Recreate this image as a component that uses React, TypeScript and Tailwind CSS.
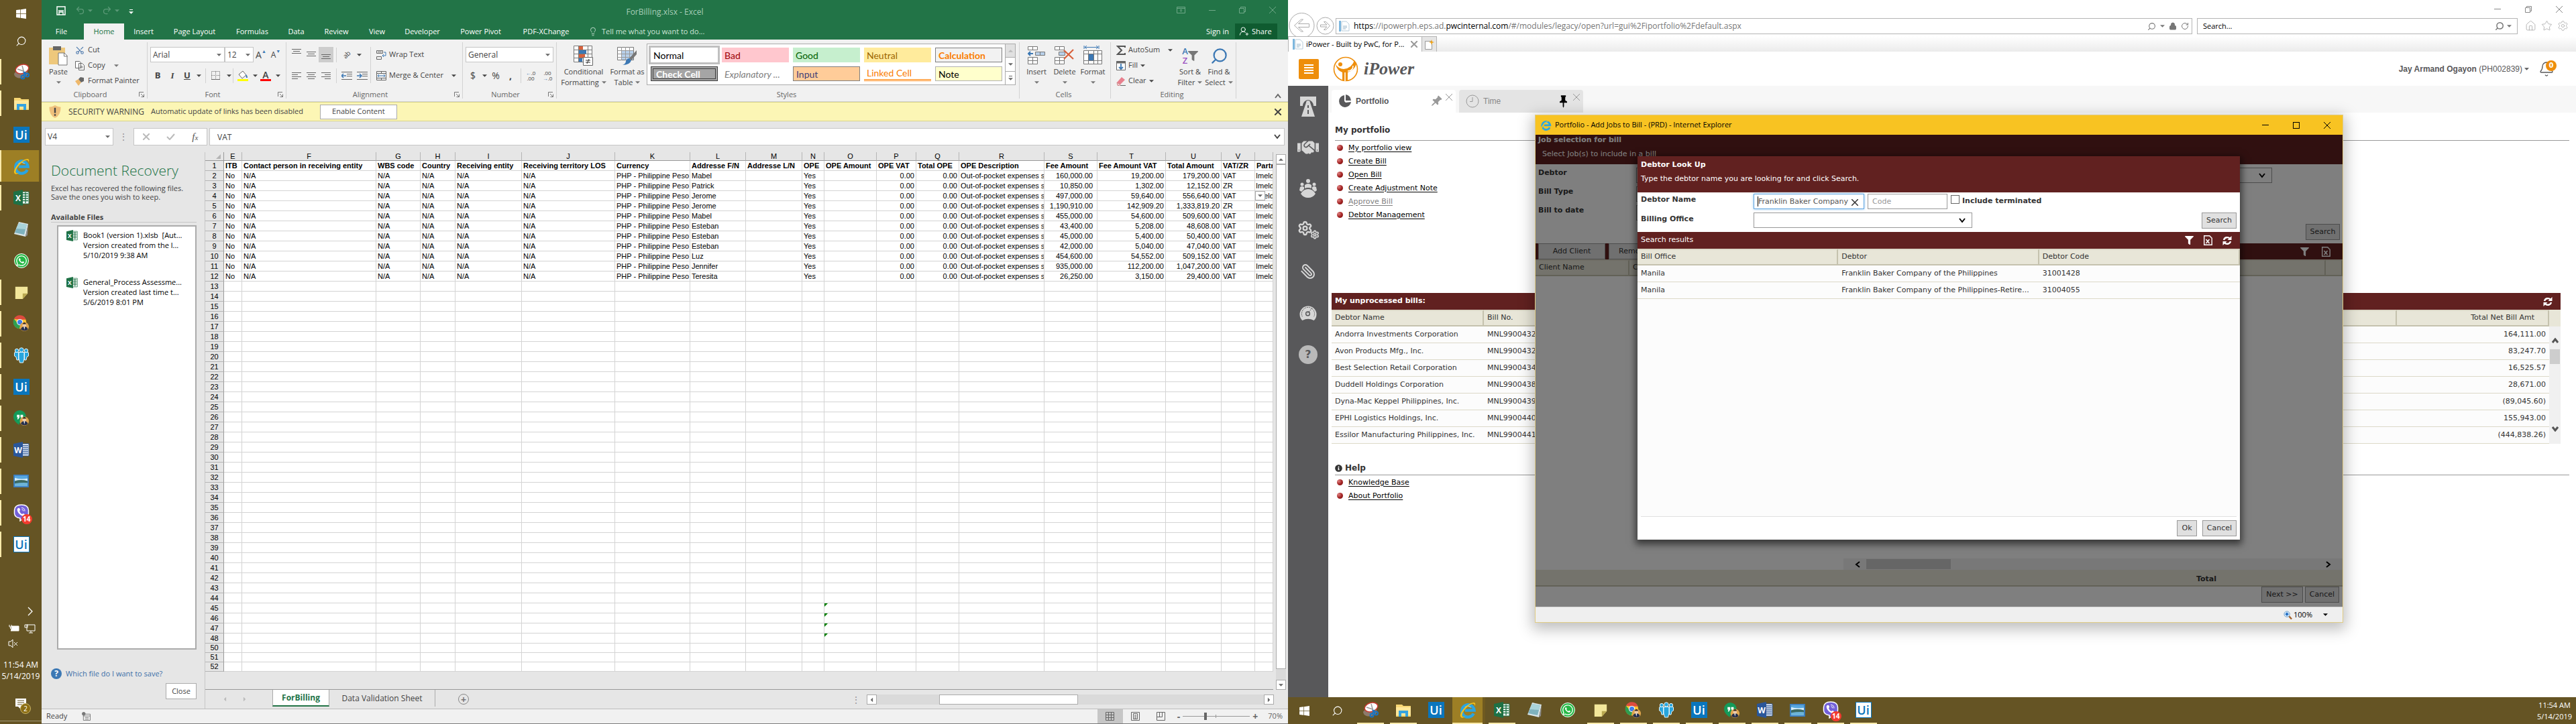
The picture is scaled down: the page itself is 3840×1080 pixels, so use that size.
import React from "react";
import { FaWindows, FaWhatsapp, FaHandshake, FaFilter, FaInfoCircle } from "react-icons/fa";
import { Search, Scissors, Paperclip, Home, Star, Settings, Bell, Lock, RotateCw, Undo2, Redo2, UserRoundPlus, Lightbulb } from "lucide-react";

type P = { children?: React.ReactNode; className?: string };

const Down = ({ className = "" }: P) => (
  <svg viewBox="0 0 8 4" className={"h-[4px] w-[7px] shrink-0 fill-current " + className}><path d="M0 0h8L4 4z" /></svg>
);
const Chev = ({ className = "" }: P) => (
  <svg viewBox="0 0 10 8" className={"h-[8px] w-[10px] shrink-0 fill-none stroke-current stroke-2 " + className}><path d="M1 1l4 5 4-5" /></svg>
);
const CloseX = ({ className = "" }: P) => (
  <svg viewBox="0 0 10 10" className={"size-[10px] shrink-0 fill-none stroke-current " + className}><path d="M0 0l10 10M10 0L0 10" /></svg>
);

/* ---------- Taskbar icons ---------- */
const UiIcon = ({ inverse = false }: { inverse?: boolean }) => (
  <span className={"flex h-[24px] w-[24px] items-center justify-center font-['Open_Sans',sans-serif] text-[18px] leading-[24px] font-semibold " + (inverse ? "border border-[#0a76bd] bg-white text-[#0a76bd]" : "bg-[#0a76bd] text-white")}>Ui</span>
);
const Snip = () => (
  <svg viewBox="0 0 24 24" className="size-[24px]"><path d="M1 15q3-5 10-5h10v7q-8 6-15 4-5-2-5-6z" fill="#8d7a6c" /><ellipse cx="13" cy="8" rx="10" ry="6.5" transform="rotate(-18 13 8)" fill="#fff" stroke="#c93b32" strokeWidth="1.5" /><path d="M6 8l9 3M13 3l3 11" stroke="#999" strokeWidth="1.5" /><g fill="none" stroke="#1874c4" strokeWidth="2"><circle cx="14" cy="20" r="2.5" /><circle cx="20.500" cy="17" r="2.500" /><path d="M15 17l3-5M18 16l-3-4" /></g></svg>
);
const Folder = () => (
  <svg viewBox="0 0 24 24" className="size-[24px]"><path d="M1 4h9l2 2h11v16H1z" fill="#f7d774" /><path d="M1 8h22v12H1z" fill="#ffe89a" /><path d="M5 22v-9h14v9h-4v-5H9v5z" fill="#35a3e0" /></svg>
);
const IEIcon = ({ small = false }: { small?: boolean }) => (
  <svg viewBox="0 0 24 24" className={small ? "size-[17px]" : "size-[26px]"}><path d="M20 17a8.500 8.500 0 1 1 .8-4.500H8" fill="none" stroke="#2aa5e2" strokeWidth="4" /><path d="M8 8.500q4-3.500 8.500 0" fill="none" stroke="#7fd3f5" strokeWidth="1.200" /><path d="M2.500 22C-1 18 9 4 19 2q5-.5 2.500 5 .5-4-3-3.500C12 5 2 17 4.500 21q2 1.500 5-1-4.500 4.500-7 2z" fill="#f5c21b" /></svg>
);
const OfficeIcon = ({ letter, word = false, small = false }: { letter: string; word?: boolean; small?: boolean }) => (
  <svg viewBox="0 0 24 24" className={small ? "size-[17px] shrink-0" : "size-[24px]"}>
    <path d="M12 3h11v18H12z" fill="#fff" stroke={word ? "#2a5699" : "#1e7145"} />
    <path d={word ? "M14 6h8M14 9h8M14 12h8M14 15h8M14 18h8" : "M14 6h8M14 9.500h8M14 13h8M14 16.500h8M18 4v16"} stroke={word ? "#2a5699" : "#1e7145"} strokeWidth="1.300" />
    <path d="M0 3l14-3v24L0 21z" fill={word ? "#2a5699" : "#1e7145"} />
    <text x="7" y="16.500" textAnchor="middle" fontSize="12" fontWeight="700" fill="#fff" fontFamily="Open Sans, sans-serif">{letter}</text>
  </svg>
);
const Notepad = () => (
  <svg viewBox="0 0 24 24" className="size-[24px]"><path d="M8 1l14 3-4 19L1 19z" fill="#d9e4e6" /><path d="M8 3l12 2-4 15L2 17z" fill="#7fb2bd" /><path d="M8 3l12 2-2 7L4 11z" fill="#a9d3da" /><path d="M22 4l-4 19 3-2z" fill="#8b8b8b" /></svg>
);
const WhatsApp = () => (
  <span className="flex size-[22px] items-center justify-center rounded-full border border-white bg-[#25b845] text-white"><FaWhatsapp size={18} /></span>
);
const Sticky = () => (
  <svg viewBox="0 0 24 24" className="size-[22px]"><path d="M2 3h20v11l-8 9H2z" fill="#f3e79b" /><path d="M22 14h-8v9z" fill="#b9a851" /></svg>
);
const Face = () => (<g><circle cx="18" cy="18" r="7" fill="#e0a54d" /><circle cx="18" cy="15.500" r="3" fill="#f1cda9" /><path d="M15 14q3-5 6 0z" fill="#33261c" /><path d="M12.500 22q1-4 5.500-4t5.500 4q-5 5-11 0z" fill="#27304d" /><path d="M17 18h2l-1 5z" fill="#fff" /></g>);
const Chrome = () => (
  <svg viewBox="0 0 26 26" className="size-[25px]"><circle cx="11" cy="11" r="10" fill="#f9c22e" /><path d="M2 6a10 10 0 0 1 18.500 1H11z" fill="#dd4b3e" /><path d="M2 6a10 10 0 0 0 8 15l3-6-6-3z" fill="#2f9e50" /><circle cx="11" cy="11" r="4.800" fill="#fff" /><circle cx="11" cy="11" r="3.700" fill="#3f7fe8" /><Face /></svg>
);
const People = () => (
  <svg viewBox="0 0 24 24" className="size-[24px]" fill="#27a5dd" stroke="#e9f7fd" strokeWidth="1"><path d="M1.500 9Q1 7.500 3 7.500h4.500V19H5L4 14.500 1.500 13zM22.500 9q.5-1.500-1.500-1.500h-4.500V19H19l1-4.500 2.500-1.500z" /><circle cx="5" cy="5" r="2.700" /><circle cx="19" cy="5" r="2.700" /><path d="M8 7.500h8V17l-1.500 6h-5L8 17z" /><circle cx="12" cy="4" r="3.200" /></svg>
);
const Hangouts = () => (
  <svg viewBox="0 0 26 26" className="size-[25px]"><path d="M11 1a10 10 0 1 1-1 20v3Q1 18 1 11A10 10 0 0 1 11 1z" fill="#149b5a" /><path d="M6.500 8h4v4l-2 3H7l1-3H6.500zM12 8h4v4l-2 3h-1.500l1-3H12z" fill="#fff" /><Face /></svg>
);
const Photo = () => (
  <svg viewBox="0 0 24 20" className="h-[19px] w-[23px]"><path d="M0 0h24v20H0z" fill="#3a7fc2" /><path d="M2 2h20v16H2z" fill="#d5ecf8" /><path d="M2 10q10-3 20 0v8H2z" fill="#3c6a63" /><path d="M2 14q12-2 20-1v5H2z" fill="#6db4d8" /><path d="M2 2h20v4Q10 8 2 5z" fill="#58a8e0" /></svg>
);
const Viber = () => (
  <span className="relative flex">
    <svg viewBox="0 0 24 26" className="h-[26px] w-[24px]"><path d="M12 1q10 0 10.500 8v5q-.5 7-8 7.500L10 25v-4Q2 20 1.500 14V9Q2 1 12 1z" fill="#7360d8" stroke="#fff" strokeWidth="1.500" /><path d="M7 6q2-1 3 2 0 2-1 2 1 4 4 5 1-1 2-1 3 1 2 3-2 2-5 0-5-3-6-7-1-3 1-4z" fill="#fff" /><path d="M12 5.500q5 0 5 5M12.500 8q2.500 0 2.500 2.500" fill="none" stroke="#fff" /></svg>
    <span className="absolute -right-1 -bottom-1 rounded-lg bg-[#f23b2f] px-[2px] font-['Open_Sans',sans-serif] text-[10px] leading-[15px] font-bold text-white">14</span>
  </span>
);

const taskItems: { name: string; icon: React.ReactNode; open: boolean; active?: boolean }[] = [
  { name: "Snipping Tool", icon: <Snip />, open: true },
  { name: "File Explorer", icon: <Folder />, open: true },
  { name: "UiPath Studio", icon: <UiIcon />, open: false },
  { name: "Internet Explorer", icon: <IEIcon />, open: true, active: true },
  { name: "Excel", icon: <OfficeIcon letter="X" />, open: true },
  { name: "Notepad", icon: <Notepad />, open: false },
  { name: "WhatsApp", icon: <WhatsApp />, open: false },
  { name: "Sticky Notes", icon: <Sticky />, open: true },
  { name: "Chrome", icon: <Chrome />, open: true },
  { name: "Teams", icon: <People />, open: true },
  { name: "UiPath", icon: <UiIcon />, open: true },
  { name: "Hangouts", icon: <Hangouts />, open: true },
  { name: "Word", icon: <OfficeIcon letter="W" word />, open: true },
  { name: "Photos", icon: <Photo />, open: true },
  { name: "Viber", icon: <Viber />, open: true },
  { name: "UiPath Robot", icon: <UiIcon inverse />, open: true },
];

function SideTaskbar() {
  return (
    <nav className="flex w-[62px] shrink-0 flex-col bg-[#655424] text-white">
      <button aria-label="Start" className="flex h-10 items-center justify-center"><FaWindows size={17} /></button>
      <button aria-label="Search" className="flex h-[43px] items-center justify-center"><Search size={17} strokeWidth={1.500} className="-scale-x-100" /></button>
      {taskItems.map((t) => (
        <button key={t.name} aria-label={t.name} className={"flex h-[47px] items-center " + (t.active ? "border-r-4 border-[#6f5a20] bg-[#9d7f25]" : "")}>
          <span className={"w-[2px] " + (t.active ? "h-full " : "h-[38px] ") + (t.open ? "bg-[#fbeaa9]" : "")} />
          <span className={"flex flex-1 justify-center " + (t.active ? "pl-1" : "pr-px")}>{t.icon}</span>
        </button>
      ))}
      <div className="mt-auto flex flex-col pb-1 text-center">
        <svg viewBox="0 0 62 66" className="h-[66px] w-[62px] fill-none stroke-white"><path d="M42 5l6 6-6 6" strokeWidth="1.300" /><path d="M17 33h11v7H16M19 35h7v4h-7z" fill="#fff" /><path d="M14 31v3h3v-3M15.500 34v3" /><path d="M40 31h12v9H40zM43 43h6M46 40v3M37 31h4v4h-4z" /><path d="M13 56h3l3-3v12l-3-3h-3zM21 57l5 5M26 57l-5 5" /></svg>
        <div className="mt-4 text-[12px] leading-[17px]"><p>11:54 AM</p><p>5/14/2019</p></div>
        <div className="relative mt-4 flex h-[38px] justify-center pt-2">
          <svg viewBox="0 0 18 18" className="size-[18px]"><path d="M1 1h16v12h-8v4l-4-4H1z" fill="#fff" /><path d="M4 4h10M4 7h10M4 10h7" stroke="#655424" /></svg>
          <span className="absolute top-4 left-[30px] size-[16px] rounded-full border border-[#c9b468] bg-[#8b6d12] text-[10px] leading-[14px]">2</span>
        </div>
        <div className="mt-1 h-px bg-[#a39a78]" />
      </div>
    </nav>
  );
}

function BottomTaskbar() {
  return (
    <nav className="flex h-10 shrink-0 bg-[#655424] text-white">
      <button aria-label="Start" className="flex w-12 items-center justify-center"><FaWindows size={17} /></button>
      <button aria-label="Search" className="flex w-[50px] items-center justify-center"><Search size={17} strokeWidth={1.500} className="-scale-x-100" /></button>
      {taskItems.map((t) => (
        <button key={t.name} aria-label={t.name} className={"flex w-[49px] flex-col items-center " + (t.active ? "border-r-4 border-[#6f5a20] bg-[#9d7f25]" : "")}>
          <span className="flex flex-1 items-center">{t.icon}</span>
          <span className={"h-[2px] " + (t.active ? "w-full " : "w-10 ") + (t.open ? "bg-[#fbeaa9]" : "")} />
        </button>
      ))}
      <div className="ml-auto flex w-[64px] flex-col justify-center text-center font-['Open_Sans',sans-serif] text-[11px] leading-[17px]"><p>11:54 AM</p><p>5/14/2019</p></div>
    </nav>
  );
}

/* ---------- Excel ribbon ---------- */
const Group = ({ label, className = "", launcher = false, children }: P & { label: string; launcher?: boolean }) => (
  <section aria-label={label} className={"my-1 flex h-[84px] shrink-0 flex-col border-r border-[#d2d2d2] " + className}>
    <div className="h-[72px]">{children}</div>
    <div className="flex h-[12px] items-center pr-1 text-[#666]">
      <span className="flex-1 text-center leading-[14px]">{label}</span>
      {launcher && <svg viewBox="0 0 8 8" className="size-[8px] fill-none stroke-[#777]"><path d="M.5 7V.5H7M3 3l4 4M7.500 3.500v4h-4" /></svg>}
    </div>
  </section>
);
const Cell = ({ className = "w-[22px]", children, label }: P & { label: string }) => (
  <button aria-label={label} className={"flex h-[23px] shrink-0 items-center justify-center " + className}>{children}</button>
);
const Sep = () => <span className="h-[22px] w-px shrink-0 bg-[#d2d2d2]" />;
const Combo = ({ value, className, label }: { value: string; className: string; label: string }) => (
  <span className={"relative flex items-center border border-[#c6c6c6] bg-white " + className}>
    <select aria-label={label} className="h-full w-full appearance-none bg-transparent px-[3px] text-[12px] outline-none"><option>{value}</option></select>
    <Down className="pointer-events-none absolute right-1 h-[3px] text-[#666]" />
  </span>
);
const Lines = ({ w }: { w: number[] }) => (
  <svg viewBox="0 0 14 12" className="h-[12px] w-[14px] stroke-[#666]">{w.map((n, i) => <path key={i} d={n < 0 ? `M${14 + n} ${i * 3 + 1.500}h${-n}` : n > 100 ? `M${(114 - n) / 2} ${i * 3 + 1.500}h${n - 100}` : `M0 ${i * 3 + 1.500}h${n}`} />)}</svg>
);
const Big = ({ icon, lines, className = "", arrowBelow = false }: { icon: React.ReactNode; lines: string[]; className?: string; arrowBelow?: boolean }) => (
  <button className={"flex flex-col items-center " + className}>
    <span className="flex h-[36px] items-center pt-1">{icon}</span>
    <span className="leading-[16px] whitespace-nowrap">{lines[0]}</span>
    <span className="flex h-[16px] items-center gap-1 leading-[16px] whitespace-nowrap">{!arrowBelow && lines[1]}<Down className="h-[3px] w-[5px] text-[#777]" /></span>
  </button>
);

const styles: { n: string; c: string }[] = [
  { n: "Normal", c: "bg-white text-black outline-3 outline-[#c0c0c0]" },
  { n: "Bad", c: "bg-[#ffc7ce] text-[#9c0006]" },
  { n: "Good", c: "bg-[#c6efce] text-[#006100]" },
  { n: "Neutral", c: "bg-[#ffeb9c] text-[#9c6500]" },
  { n: "Calculation", c: "bg-[#f2f2f2] border border-[#7f7f7f] font-bold text-[#fa7d00]" },
  { n: "Check Cell", c: "bg-[#a5a5a5] border-4 border-double border-[#3f3f3f] font-bold text-white" },
  { n: "Explanatory ...", c: "bg-white italic text-[#7f7f7f]" },
  { n: "Input", c: "bg-[#ffcc99] border border-[#7f7f7f] text-[#3f3f76]" },
  { n: "Linked Cell", c: "bg-white border-b-3 border-double border-[#ff8001] text-[#fa7d00]" },
  { n: "Note", c: "bg-[#ffffcc] border border-[#b2b2b2] text-black" },
];

function Ribbon() {
  return (
    <div className="flex h-[93px] shrink-0 border-b border-[#d2d2d2] bg-[#f1f1f1] text-[#444]">
      <Group label="Clipboard" launcher className="w-[158px]">
        <div className="flex">
          <Big className="w-[50px]" arrowBelow lines={["Paste"]} icon={<svg viewBox="0 0 28 30" className="h-[30px] w-[28px]"><path d="M0 3h24v25H0z" fill="#eec87c" /><path d="M6 1h12v6H6z" fill="#666" /><path d="M14 11h9l4 4v14H14z" fill="#fff" stroke="#777" /><path d="M22.500 11v5h5" fill="none" stroke="#777" /></svg>} />
          <div className="flex flex-col">
            {[["Cut", <Scissors key="c" size={14} strokeWidth={1.800} className="-rotate-90 text-[#4472a8]" />], ["Copy", <svg key="p" viewBox="0 0 14 14" className="size-[14px] fill-white stroke-[#666]"><path d="M.5.5h6l2 2v8h-8zM5.500 3.500h5l3 3v7h-8zM7.500 8h4M7.500 10h4" /></svg>], ["Format Painter", <svg key="f" viewBox="0 0 14 14" className="size-[14px]"><path d="M0 7l5-3 4 5-4 5z" fill="#eeb86b" /><path d="M5 4l3-3 5 1v5L9 9z" fill="#666" /></svg>]].map(([t, i]) => (
              <button key={t as string} className="flex h-[23px] items-center gap-[5px] whitespace-nowrap">{i}{t}{t === "Copy" && <Down className="ml-2 h-[3px] w-[5px] text-[#777]" />}</button>
            ))}
          </div>
        </div>
      </Group>
      <Group label="Font" launcher className="w-[207px]">
        <div className="flex flex-col gap-2 pt-[7px] pl-1">
          <div className="flex items-center"><Combo label="Font name" value="Arial" className="h-[23px] w-[111px]" /><Combo label="Font size" value="12" className="h-[23px] w-[43px]" />
            <Cell label="Increase font size"><span className="text-[14px]">A</span><span className="mb-2 text-[7px] text-[#3c78b4]">▲</span></Cell><Cell label="Decrease font size"><span className="text-[12px]">A</span><span className="mb-2 text-[7px] text-[#3c78b4]">▼</span></Cell></div>
          <div className="flex items-center text-[13px]">
            <Cell label="Bold"><b>B</b></Cell><Cell label="Italic"><b className="font-['Liberation_Serif',serif] italic">I</b></Cell><Cell label="Underline"><b className="underline">U</b></Cell><Cell label="Underline options" className="w-3"><Down className="h-[3px] w-[5px]" /></Cell>
            <span className="w-1" /><Sep />
            <Cell label="Borders" className="w-7"><svg viewBox="0 0 13 13" className="size-[13px] fill-none stroke-[#666]"><path strokeDasharray="1 1" d="M.5.5h12v12H.5zM6.500 0v13M0 6.500h13" /><path d="M0 12.500h13" /></svg></Cell><Cell label="Border options" className="w-3"><Down className="h-[3px] w-[5px]" /></Cell>
            <Sep />
            <Cell label="Fill colour" className="w-7"><svg viewBox="0 0 16 16" className="size-[16px]"><path d="M2 6l6-5 5 6-6 5z" fill="#fff" stroke="#666" /><path d="M12 6q3 1 3 5h-2z" fill="#3c78b4" /><path d="M0 13h16v3H0z" fill="#ff0" /></svg></Cell><Cell label="Fill options" className="w-2"><Down className="h-[3px] w-[5px]" /></Cell>
            <Cell label="Font colour" className="w-6"><span className="border-b-3 border-[#f00] px-[3px] text-[14px] leading-[13px] font-semibold">A</span></Cell><Cell label="Font colour options" className="w-3"><Down className="h-[3px] w-[5px]" /></Cell>
          </div>
        </div>
      </Group>
      <Group label="Alignment" launcher className="w-[263px]">
        <div className="flex gap-1 pt-[7px] pl-1">
          <div className="flex flex-col gap-2">
            <div className="flex items-center"><Cell label="Top" className="w-[22px] pb-2"><Lines w={[14, 110, 14]} /></Cell><Cell label="Middle"><Lines w={[14, 110, 14]} /></Cell><Cell label="Bottom" className="w-[22px] bg-[#cdcdcd] pt-2"><Lines w={[14, 110, 14]} /></Cell><span className="w-1" /><Sep />
              <Cell label="Orientation" className="w-[30px]"><span className="-rotate-45 text-[10px]">ab</span></Cell><Down className="h-[3px] w-[5px]" /></div>
            <div className="flex items-center"><Cell label="Left"><Lines w={[14, 9, 14, 9]} /></Cell><Cell label="Centre"><Lines w={[14, 110, 14, 110]} /></Cell><Cell label="Right"><Lines w={[-14, -9, -14, -9]} /></Cell><span className="w-1" /><Sep />
              <Cell label="Decrease indent" className="w-[30px]"><svg viewBox="0 0 16 12" className="h-[12px] w-[16px] stroke-[#666]"><path d="M0 .5h16M8 3.500h8M8 6.500h8M0 11.500h16" /><path d="M1 6h6M3 3L0 6l3 3" fill="none" stroke="#3c78b4" strokeWidth="1.500" /></svg></Cell>
              <Cell label="Increase indent" className="w-[16px]"><svg viewBox="0 0 16 12" className="h-[12px] w-[16px] stroke-[#666]"><path d="M0 .5h16M8 3.500h8M8 6.500h8M0 11.500h16" /><path d="M0 6h6M4 3l3 3-3 3" fill="none" stroke="#3c78b4" strokeWidth="1.500" /></svg></Cell></div>
          </div>
          <div className="flex flex-col gap-2 border-l border-[#d2d2d2] pl-2">
            <button className="flex h-[23px] items-center gap-1"><svg viewBox="0 0 15 14" className="h-[14px] w-[15px] fill-none stroke-[#666]"><path d="M.5.500h9v4h-9zM.5 9.500h7v4h-7zM2 2.500h6" /><path d="M11 3h3v5H9m2-2L9 8l2 2" stroke="#3c78b4" /></svg>Wrap Text</button>
            <button className="flex h-[23px] items-center gap-1 whitespace-nowrap"><svg viewBox="0 0 15 14" className="h-[14px] w-[15px] fill-none stroke-[#666]"><path d="M.5.5h14v13H.5zM0 3.500h15M0 10.500h15M7.500 0v3.500M7.500 10.500V14" /><path d="M2 7h11M4 5L2 7l2 2M11 5l2 2-2 2" stroke="#3c78b4" /></svg>Merge &amp; Center<Down className="ml-2 h-[3px] w-[5px]" /></button>
          </div>
        </div>
      </Group>
      <Group label="Number" launcher className="w-[140px]">
        <div className="flex flex-col gap-2 pt-[7px] pl-1">
          <Combo label="Number format" value="General" className="h-[23px] w-[131px]" />
          <div className="flex items-center text-[14px]"><Cell label="Currency">$</Cell><Cell label="Currency options" className="w-3"><Down className="h-[3px] w-[5px]" /></Cell><Cell label="Percent">%</Cell><Cell label="Comma"><b>,</b></Cell><span className="w-1" /><Sep />
            <Cell label="Increase decimal" className="w-7"><span className="text-[8px] leading-[8px]"><b className="text-[#3c78b4]">←</b>.0<br />.00</span></Cell><Cell label="Decrease decimal"><span className="text-[8px] leading-[8px]">.00<br /><b className="text-[#3c78b4]">→</b>.0</span></Cell></div>
        </div>
      </Group>
      <Group label="Styles" className="w-[690px]">
        <div className="flex">
          <Big className="w-[80px]" lines={["Conditional", "Formatting"]} icon={<svg viewBox="0 0 30 30" className="size-[30px]"><path d="M.5.5h27v24H.5z" fill="#fff" stroke="#777" /><path d="M.5 6.500h27M.5 12.500h27M.5 18.500h27M7.500 0v25M21.500 0v25" stroke="#777" /><path d="M8 1h6v5H8zM8 13h9v5H8z" fill="#d8613c" /><path d="M8 7h11v5H8zM8 19h5v5H8z" fill="#3c78b4" /><path d="M14.500 17.500h14v12h-14z" fill="#fff" stroke="#666" /><path d="M18 22h7M18 25h7M23 20l-3 7" stroke="#333" /></svg>} />
          <Big className="w-[50px]" lines={["Format as", "Table"]} icon={<svg viewBox="0 0 30 30" className="size-[30px]"><path d="M.5 2.500h24v19H.5z" fill="#fff" stroke="#777" /><path d="M7 8h17v13H7z" fill="#b8d0ea" /><path d="M.5 7.500h24M.5 12.500h24M.5 17.500h24M6.500 2v20M12.500 2v20M18.500 2v20" stroke="#999" /><path d="M29 7v6l-8 9-3-3z" fill="#777" /><path d="M18 19l3 3q-2 7-13 7 5-2 5-6 2-4 5-4z" fill="#3c78b4" /></svg>} />
          <div className="mt-[2px] ml-1 flex h-[62px] border border-[#ababab] bg-white">
            <div className="grid grid-cols-5 gap-x-[6px] gap-y-[6px] py-[5px] pr-1 pl-[5px] font-['Lato',sans-serif] text-[14px]">
              {styles.map((s) => <button key={s.n} className={"flex h-[22px] w-[100px] items-center px-1 whitespace-nowrap " + s.c}>{s.n}</button>)}
            </div>
            <div className="flex w-[15px] flex-col border-l border-[#ababab] text-[#666]">
              <button aria-label="Previous styles" className="flex flex-1 items-center justify-center bg-[#e1e1e1] text-[#bbb]"><Down className="h-[3px] w-[5px] rotate-180" /></button>
              <button aria-label="Next styles" className="flex flex-1 items-center justify-center border-y border-[#ababab]"><Down className="h-[3px] w-[5px]" /></button>
              <button aria-label="More styles" className="flex flex-1 flex-col items-center justify-center gap-[2px]"><i className="h-px w-[5px] bg-[#666]" /><Down className="h-[3px] w-[5px]" /></button>
            </div>
          </div>
        </div>
      </Group>
      <Group label="Cells" className="w-[136px]">
        <div className="flex pl-1">
          <Big className="w-[42px]" arrowBelow lines={["Insert"]} icon={<svg viewBox="0 0 27 28" className="h-[28px] w-[27px] fill-white stroke-[#777]"><path d="M.5.5h14v5H.5zM7.500.5v5M.5 16.500h14v10H.5zM7.500 16.500v10M.5 21.500h14" /><path d="M11.500 8.500h14v5h-14zM18.500 8.500v5" fill="#b8d0ea" /><path d="M1 11h7M4 8l-3 3 3 3" fill="none" stroke="#3c78b4" strokeWidth="2" /></svg>} />
          <Big className="w-[42px]" arrowBelow lines={["Delete"]} icon={<svg viewBox="0 0 30 28" className="h-[28px] w-[30px] fill-white stroke-[#777]"><path d="M.5.5h14v5H.5zM7.500.5v5M.5 16.500h14v10H.5zM7.500 16.500v10M.5 21.500h14" /><path d="M6.500 8.500h9v5h-9z" fill="#b8d0ea" /><path d="M14 6l14 13M28 5L14 19" stroke="#d8613c" strokeWidth="2.200" /></svg>} />
          <Big className="w-[42px]" arrowBelow lines={["Format"]} icon={<svg viewBox="0 0 28 30" className="h-[30px] w-[28px] fill-white stroke-[#777]"><path d="M.5 7.500h27v20H.5zM.5 12.500h27M.5 22.500h27M7.500 7.500v20M15.500 7.500v20M21.500 7.500v20" /><path d="M8 13h7v9H8z" fill="#3c78b4" stroke="none" /><path d="M1 0v5M23 0v5M2 2.500h20M5 0L2 2.500 5 5M19 0l3 2.500L19 5" fill="none" stroke="#3c78b4" /></svg>} />
        </div>
      </Group>
      <Group label="Editing" className="w-[187px]">
        <div className="flex pl-2">
          <div className="flex w-[86px] flex-col">
            <button className="flex h-[23px] items-center gap-1"><svg viewBox="0 0 14 14" className="size-[14px] fill-none stroke-[#555] stroke-2"><path d="M13 3V1H2l6 6-6 6h11v-2" /></svg>AutoSum<Down className="ml-2 h-[3px] w-[5px]" /></button>
            <button className="flex h-[23px] items-center gap-1"><svg viewBox="0 0 14 14" className="size-[14px] fill-white stroke-[#666]"><path d="M.5.5h13v13H.5z" /><path d="M0 2h14" strokeWidth="3" /><path d="M7 4v8M4 9l3 3 3-3" fill="none" stroke="#3c78b4" strokeWidth="1.800" /></svg>Fill<Down className="h-[3px] w-[5px]" /></button>
            <button className="flex h-[23px] items-center gap-1"><svg viewBox="0 0 14 14" className="size-[14px]"><path d="M1 9l7-8 5 4-7 7z" fill="#e8808e" /><path d="M1 9l5 3-1 1.500H2z" fill="#f6c9cf" stroke="#c88" /><path d="M6 13.500h8" stroke="#666" /></svg>Clear<Down className="h-[3px] w-[5px]" /></button>
          </div>
          <Big className="w-[48px]" lines={["Sort &", "Filter"]} icon={<span className="flex items-center"><span className="text-[13px] leading-[14px] font-semibold text-[#3c78b4]">A<br /><span className="text-[#9a4fc0]">Z</span></span><FaFilter size={15} className="text-[#777]" /></span>} />
          <Big className="w-[38px]" lines={["Find &", "Select"]} icon={<Search size={27} strokeWidth={2} className="-scale-x-100 text-[#3c78b4]" />} />
        </div>
      </Group>
      <button aria-label="Collapse ribbon" className="mt-auto mr-[10px] mb-1 ml-auto text-[#666]"><Chev className="rotate-180" /></button>
    </div>
  );
}

/* ---------- Excel grid ---------- */
const cols: [string, string][] = [
  ["E", "w-[27px]"], ["F", "w-[200px]"], ["G", "w-[66px]"], ["H", "w-[52px]"], ["I", "w-[99px]"], ["J", "w-[139px]"], ["K", "w-[112px]"],
  ["L", "w-[83px]"], ["M", "w-[84px]"], ["N", "w-[33px]"], ["O", "w-[78px]"], ["P", "w-[59px]"], ["Q", "w-[64px]"], ["R", "w-[127px]"],
  ["S", "w-[79px]"], ["T", "w-[102px]"], ["U", "w-[83px]"], ["V", "w-[50px]"], ["", ""],
];
const heads = ["ITB", "Contact person in receiving entity", "WBS code", "Country", "Receiving entity", "Receiving territory LOS", "Currency", "Addresse F/N", "Addresse L/N", "OPE", "OPE Amount", "OPE VAT", "Total OPE", "OPE Description", "Fee Amount", "Fee Amount VAT", "Total Amount", "VAT/ZR", "Partr"];
const records: [string, string, string, string, string][] = [
  ["Mabel", "160,000.00", "19,200.00", "179,200.00", "VAT"], ["Patrick", "10,850.00", "1,302.00", "12,152.00", "ZR"],
  ["Jerome", "497,000.00", "59,640.00", "556,640.00", "VAT"], ["Jerome", "1,190,910.00", "142,909.20", "1,333,819.20", "ZR"],
  ["Mabel", "455,000.00", "54,600.00", "509,600.00", "VAT"], ["Esteban", "43,400.00", "5,208.00", "48,608.00", "VAT"],
  ["Esteban", "45,000.00", "5,400.00", "50,400.00", "VAT"], ["Esteban", "42,000.00", "5,040.00", "47,040.00", "VAT"],
  ["Luz", "454,600.00", "54,552.00", "509,152.00", "VAT"], ["Jennifer", "935,000.00", "112,200.00", "1,047,200.00", "VAT"],
  ["Teresita", "26,250.00", "3,150.00", "29,400.00", "VAT"],
];
const rowOf = (r: [string, string, string, string, string]) => ["No", "N/A", "N/A", "N/A", "N/A", "N/A", "PHP - Philippine Peso", r[0], "", "Yes", "", "0.00", "0.00", "Out-of-pocket expenses s", r[1], r[2], r[3], r[4], "Imeld"];
const rowNumbers = [...Array.from({ length: 48 }, (_, i) => i + 1), 50, 51, 52];

function Grid() {
  return (
    <table className="w-full table-fixed border-separate border-spacing-0 font-['Liberation_Sans',Arial,sans-serif] text-[11px] text-black">
      <colgroup><col className="w-[28px]" />{cols.map(([c, w], i) => <col key={c + i} className={w} />)}</colgroup>
      <thead>
        <tr className="h-[13px]">
          <th className="border-r border-b border-[#999] bg-[#e6e6e6] p-0"><svg viewBox="0 0 8 8" className="mr-1 ml-auto size-[7px] fill-[#b5b5b5]"><path d="M8 0v8H0z" /></svg></th>
          {cols.map(([c], i) => <th key={i} className="border-r border-b border-r-[#b5b5b5] border-b-[#999] bg-[#e6e6e6] p-0 leading-[12px] font-normal">{c}</th>)}
        </tr>
      </thead>
      <tbody>
        {rowNumbers.map((n) => {
          const vals = n === 1 ? heads : n <= 12 ? rowOf(records[n - 2]) : null;
          return (
            <tr key={n} className={n < 49 ? "h-[15px]" : "h-[14px]"}>
              <th className="border-r border-b border-r-[#999] border-b-[#b5b5b5] bg-[#e6e6e6] p-0 leading-[13px] font-normal">{n}</th>
              {cols.map((_, i) => (
                <td key={i} className={"relative overflow-hidden border-r border-b border-[#d4d4d4] bg-white p-0 leading-[13px] whitespace-nowrap " + (n === 1 ? "pl-[2px] font-bold" : i === 14 ? "pr-[6px] text-right" : i === 11 || i === 12 || i === 15 || i === 16 ? "pr-[2px] text-right" : i === 18 ? "pl-px" : "pl-[2px]")}>
                  {vals ? vals[i] : null}
                  {n === 4 && i === 18 && <button aria-label="Open list" className="absolute top-0 left-0 flex h-[14px] w-[15px] items-center justify-center border border-[#aaa] bg-white text-[#666]"><Down className="h-[3px] w-[5px]" /></button>}
                  {n >= 45 && n <= 48 && i === 10 && <svg viewBox="0 0 5 5" className="absolute top-0 left-0 size-[5px] fill-[#008000]"><path d="M0 0h5L0 5z" /></svg>}
                </td>
              ))}
            </tr>
          );
        })}
      </tbody>
    </table>
  );
}

const Recovered = ({ lines, className = "" }: { lines: string[]; className?: string }) => (
  <button className={"flex w-full gap-2 pl-3 text-left text-black " + className}>
    <OfficeIcon letter="X" small />
    <span className="leading-[15px] whitespace-pre">{lines.map((l) => <span key={l} className="block">{l}</span>)}</span>
  </button>
);

const ribbonTabs: [string, string][] = [["Insert", "w-[58px]"], ["Page Layout", "w-[94px]"], ["Formulas", "w-[78px]"], ["Data", "w-[53px]"], ["Review", "w-[67px]"], ["View", "w-[54px]"], ["Developer", "w-[81px]"], ["Power Pivot", "w-[93px]"], ["PDF-XChange", "w-[102px]"]];

function Excel() {
  return (
    <main className="flex min-w-0 flex-1 flex-col border-b border-[#7a7a7a] bg-[#e6e6e6] text-[#444]">
      <header className="shrink-0 bg-[#227447] text-white">
        <div className="flex h-[35px] items-start">
          <div className="flex w-[240px] items-center gap-[14px] pt-2 pl-[22px] text-[#5c9a78]">
            <button aria-label="Save"><svg viewBox="0 0 14 14" className="size-[14px] fill-none stroke-white stroke-[1.500]"><path d="M1 1h12v12H1zM3 7h8M4 13V9h6v4" /></svg></button>
            <button aria-label="Undo" className="flex items-center gap-1"><Undo2 size={15} /><Down className="h-[3px] w-[5px]" /></button>
            <button aria-label="Redo" className="flex items-center gap-1"><Redo2 size={15} /><Down className="h-[3px] w-[5px]" /></button>
            <button aria-label="Customize" className="flex flex-col items-center gap-[2px] pt-1 text-white"><i className="h-px w-[5px] bg-white" /><Down className="h-[3px] w-[5px]" /></button>
          </div>
          <h1 className="flex-1 pt-[10px] text-center text-[12px] leading-[16px] text-[#a7cdb7]">ForBilling.xlsx - Excel</h1>
          <div className="flex w-[240px] items-center justify-end gap-[35px] pt-[10px] pr-[18px] text-[#6fa888]">
            <svg viewBox="0 0 13 10" className="h-[10px] w-[13px] fill-none stroke-current"><path d="M.5.5h12v9H.5zM0 2.500h13M6.500 8V4M5 5.500L6.500 4 8 5.500" /></svg>
            <i className="h-px w-[10px] bg-current" />
            <svg viewBox="0 0 10 10" className="size-[10px] fill-none stroke-current"><path d="M.5 2.500h7v7h-7zM2.500 2.500v-2h7v7h-2" /></svg>
            <CloseX />
          </div>
        </div>
        <nav className="flex h-[24px] items-stretch leading-[24px]">
          <button className="mr-[4px] w-[59px]">File</button>
          <button className="w-[60px] bg-[#f1f1f1] text-[#227447]">Home</button>
          {ribbonTabs.map(([t, w]) => <button key={t} className={"whitespace-nowrap " + w}>{t}</button>)}
          <button className="ml-3 flex items-center gap-[6px] text-[#cfe4d8]"><Lightbulb size={14} strokeWidth={1.500} />Tell me what you want to do...</button>
          <button className="ml-auto pr-[9px]">Sign in</button>
          <button className="mr-4 mb-px flex w-[63px] items-center gap-1 bg-[#0f5b30] px-[6px]"><UserRoundPlus size={15} strokeWidth={1.500} />Share</button>
        </nav>
      </header>
      <Ribbon />
      <div className="flex h-[29px] shrink-0 items-center border-y border-[#d9d58a] bg-[#fcf6b5] pr-[10px] pl-[10px]">
        <svg viewBox="0 0 20 22" className="h-[21px] w-[20px]"><path d="M10 1q5 3 9 3 0 13-9 17Q1 17 1 4q4 0 9-3z" fill="#eec07c" /><path d="M10 5v8M10 15v2.500" stroke="#444" strokeWidth="2.500" /></svg>
        <span className="ml-[10px] text-[12px]">SECURITY WARNING</span>
        <span className="ml-[10px]">Automatic update of links has been disabled</span>
        <button className="ml-[25px] h-[22px] w-[115px] border border-[#ababab] bg-white">Enable Content</button>
        <button aria-label="Dismiss" className="ml-auto"><CloseX className="size-[8px] stroke-2" /></button>
      </div>
      <div className="flex h-[46px] shrink-0 items-start pt-[10px] pr-[5px] pl-[5px]">
        <Combo label="Name box" value="V4" className="h-[26px] w-[102px]" />
        <span className="w-[30px] pt-[2px] text-center text-[14px] text-[#999]">⋮</span>
        <div className="flex h-[26px] w-[110px] items-center justify-around border border-[#c6c6c6] bg-white text-[#bbb]">
          <button aria-label="Cancel"><CloseX className="stroke-2" /></button>
          <button aria-label="Enter"><svg viewBox="0 0 13 10" className="h-[10px] w-[13px] fill-none stroke-current stroke-2"><path d="M1 5l4 4 7-8" /></svg></button>
          <button className="font-['Liberation_Serif',serif] text-[15px] text-[#555] italic">f<span className="text-[11px]">x</span></button>
        </div>
        <div className="relative ml-[3px] flex h-[26px] flex-1 items-center border border-[#c6c6c6] bg-white">
          <input aria-label="Formula" defaultValue="VAT" className="h-full w-full bg-transparent pl-[11px] text-[12px] outline-none" />
          <Chev className="absolute right-[5px] h-[6px] w-[8px]" />
        </div>
      </div>
      <div className="flex min-h-0 flex-1">
        <aside className="flex w-[244px] shrink-0 flex-col border-r border-[#c6c6c6] pr-[12px] pl-[14px]">
          <h2 className="mt-[13px] text-[21px] leading-[28px] font-light whitespace-nowrap text-[#227447]">Document Recovery</h2>
          <p className="mt-[6px] leading-[13px] whitespace-nowrap">Excel has recovered the following files.<br />Save the ones you wish to keep.</p>
          <h3 className="mt-4 border-b border-[#c6c6c6] leading-[15px] font-bold">Available Files</h3>
          <div className="mt-[4px] ml-[9px] flex min-h-0 flex-1 flex-col overflow-hidden border-2 border-[#ababab] bg-white pt-[5px]">
            <Recovered lines={["Book1 (version 1).xlsb  [Aut...", "Version created from the l...", "5/10/2019 9:38 AM"]} />
            <Recovered className="mt-[25px]" lines={["General_Process Assessme...", "Version created last time t...", "5/6/2019 8:01 PM"]} />
          </div>
          <a href="#help" className="mt-[27px] flex items-center gap-[6px] leading-[17px] text-[#3c6fa8]"><span className="flex size-[16px] items-center justify-center rounded-full bg-[#3c78b4] text-[12px] font-bold text-white">?</span>Which file do I want to save?</a>
          <button className="mt-[6px] mb-[14px] h-[24px] w-[46px] shrink-0 self-end border border-[#ababab] bg-white">Close</button>
        </aside>
        <div className="flex min-w-0 flex-1 flex-col">
          <div className="flex min-h-0 flex-1">
            <div className="min-w-0 flex-1 overflow-hidden border-b border-[#999]"><Grid /></div>
            <div className="flex w-[22px] flex-col pt-[3px] pr-[3px] pl-[4px] text-[#666]">
              <button aria-label="Scroll up" className="flex h-[15px] items-center justify-center border border-[#ababab] bg-white"><Down className="rotate-180" /></button>
              <span className="flex-1 border border-[#ababab] bg-white" />
              <span className="h-4 bg-[#dadada]" />
              <button aria-label="Scroll down" className="flex h-[15px] items-center justify-center border border-[#ababab] bg-white"><Down /></button>
            </div>
          </div>
          <div className="flex h-[28px] shrink-0">
            <div className="flex w-[100px] items-center gap-[22px] pl-[26px] text-[#bbb]"><Down className="rotate-90" /><Down className="-rotate-90" /></div>
            <button className="h-[25px] w-[85px] border-x border-b-2 border-x-[#ababab] border-b-[#227447] bg-white text-[12px] font-bold text-[#227447]">ForBilling</button>
            <button className="h-[25px] w-[158px] border-r border-[#ababab] text-[12px]">Data Validation Sheet</button>
            <button aria-label="New sheet" className="mt-[6px] ml-[34px] size-[16px] rounded-full border border-[#888] text-[14px] leading-[13px] font-bold text-[#777]">+</button>
            <div className="mt-[7px] mr-[21px] ml-auto flex h-[15px] w-[630px] items-center">
              <span className="flex w-[23px] justify-start text-[14px] text-[#999]">⋮</span>
              <button aria-label="Scroll left" className="flex h-full w-[15px] items-center justify-center border border-[#ababab] bg-white text-[#666]"><Down className="rotate-90" /></button>
              <span className="flex h-full flex-1 bg-[#dadada] pl-[93px]"><span className="w-[207px] border border-[#ababab] bg-white" /></span>
              <button aria-label="Scroll right" className="flex h-full w-[15px] items-center justify-center border border-[#ababab] bg-white text-[#666]"><Down className="-rotate-90" /></button>
            </div>
          </div>
        </div>
      </div>
      <footer className="flex h-[22px] shrink-0 items-center border-t border-[#bdbdbd] bg-[#f1f1f1] pr-2 pl-[7px]">
        <span>Ready</span>
        <svg viewBox="0 0 14 14" className="ml-[22px] size-[13px] fill-none stroke-[#777]"><path d="M2.500 3.500h11v10h-11zM2 6.500h12M5 9h6M5 11.500h6" /><circle cx="3" cy="3" r="2.500" fill="#777" /></svg>
        <div className="ml-auto flex h-full items-center text-[#666]">
          <button aria-label="Normal view" className="flex h-full w-[38px] items-center justify-center bg-[#c6c6c6]"><svg viewBox="0 0 13 13" className="size-[13px] fill-none stroke-current"><path d="M.5.5h12v12H.5zM4.500 0v13M8.500 0v13M0 4.500h13M0 8.500h13" /></svg></button>
          <button aria-label="Page layout view" className="flex h-full w-[38px] items-center justify-center"><svg viewBox="0 0 13 13" className="size-[13px] fill-none stroke-current"><path d="M.5.5h12v12H.5zM3.500 2.500h6v8h-6zM5 5h3M5 7h3M5 9h3" /></svg></button>
          <button aria-label="Page break view" className="flex h-full w-[38px] items-center justify-center"><svg viewBox="0 0 13 13" className="size-[13px] fill-none stroke-current"><path d="M.5.5h12v12H.5zM.5 7.500h8v-7M4.500.5v7" /></svg></button>
          <b className="ml-[5px] text-[14px]">-</b>
          <span className="mx-1 flex h-[11px] w-[100px] items-center bg-[linear-gradient(#999,#999)] bg-[length:100%_1px] bg-center bg-no-repeat"><i className="ml-[32px] h-full w-[4px] bg-[#666]" /><i className="ml-[13px] h-[5px] w-px bg-[#999]" /></span>
          <b className="text-[14px]">+</b><span className="ml-[15px]">70%</span>
        </div>
      </footer>
    </main>
  );
}

/* ---------- iPower ---------- */
const FilterIcon = () => <FaFilter size={13} />;
const XlsIcon = () => (
  <svg viewBox="0 0 13 15" className="h-[15px] w-[13px] fill-none stroke-current"><path d="M.7.700h8l3.500 3.500v10H.7z" strokeWidth="1.400" /><path d="M3.500 6l5 6M8.500 6l-5 6" strokeWidth="1.600" /></svg>
);
const Refresh = () => (
  <svg viewBox="0 0 14 14" className="size-[14px] fill-none stroke-current"><path d="M2 6a5.200 5.200 0 0 1 9-2M12 8a5.200 5.200 0 0 1-9 2" strokeWidth="2.400" /><path d="M13.500 0v6h-6zM.5 14V8h6z" fill="currentColor" stroke="none" /></svg>
);
const Bullet = () => <span className="size-[9px] shrink-0 rounded-full bg-[radial-gradient(circle_at_30%_30%,#e08080,#a02020_55%,#701010)]" />;
const PageIcon = () => (
  <svg viewBox="0 0 16 16" className="size-[16px] shrink-0"><path d="M0 0h3v16H0z" fill="#7db7de" /><path d="M4 1h7l4 4v10H4z" fill="#fff" stroke="#b9cddb" /><path d="M6 8h6M6 10h6M6 12h4" stroke="#9db8ca" /></svg>
);
const Pin = ({ className = "" }: P) => (
  <svg viewBox="0 0 12 20" className={"h-[19px] w-[11px] fill-current " + className}><path d="M2 0h8v2L9 3v5l3 2v2H7v6l-1 2-1-2v-6H0v-2l3-2V3L2 2z" /></svg>
);
const LinkList = ({ items }: { items: string[] }) => (
  <ul>
    {items.map((t) => (
      <li key={t} className="flex h-[20px] items-center gap-2 pl-[3px]"><Bullet /><a href="#menu" className={"leading-[15px] underline underline-offset-2 " + (t === "Approve Bill" ? "text-[#808080]" : "text-black")}>{t}</a></li>
    ))}
  </ul>
);
const Btn = ({ children, className = "" }: P) => <button className={"h-[24px] border border-[#999] bg-[#e0e0e0] whitespace-nowrap text-[#333] " + className}>{children}</button>;

const bills: [string, string, string][] = [
  ["Andorra Investments Corporation", "MNL9900432", "164,111.00"], ["Avon Products Mfg., Inc.", "MNL9900432", "83,247.70"],
  ["Best Selection Retail Corporation", "MNL9900434", "16,525.57"], ["Duddell Holdings Corporation", "MNL9900438", "28,671.00"],
  ["Dyna-Mac Keppel Philippines, Inc.", "MNL9900439", "(89,045.60)"], ["EPHI Logistics Holdings, Inc.", "MNL9900440", "155,943.00"],
  ["Essilor Manufacturing Philippines, Inc.", "MNL9900441", "(444,838.26)"],
];

const th = "h-[25px] border-r-2 border-b-2 border-t-2 border-[#c5c2ae] border-t-[#dcd9c8] bg-[#e8e6d8] px-[5px] text-left font-normal";

function DebtorDialog() {
  return (
    <div role="dialog" aria-label="Debtor Look Up" className="absolute top-[61px] right-[153px] bottom-[123px] left-[152px] flex flex-col bg-[#fcfcfc] text-[#333] shadow-[0_4px_10px_3px_rgba(0,0,0,0.55)]">
      <div className="h-[54px] shrink-0 bg-[#612120] px-[5px] pt-[5px] text-white"><h2 className="leading-[16px] font-bold">Debtor Look Up</h2><p className="mt-[5px] leading-[16px]">Type the debtor name you are looking for and click Search.</p></div>
      <div className="flex h-[59px] shrink-0 flex-col gap-[5px] bg-white px-[5px] pt-[2px]">
        <div className="flex h-[23px] items-start">
          <label htmlFor="dn" className="w-[168px] pt-[1px] leading-[15px] font-bold">Debtor Name</label>
          <span className="relative flex w-[165px]"><input id="dn" defaultValue="Franklin Baker Company" className="h-[23px] w-full border border-[#5fa4e0] bg-white pr-3 pl-[6px] text-[#555] shadow-[0_0_4px_#9cc8ee] outline-none" /><i className="absolute top-[4px] left-[6px] h-[15px] w-px bg-black" /><CloseX className="absolute top-[8px] right-[9px] size-[8px] stroke-[1.500]" /></span>
          <input aria-label="Code" placeholder="Code" className="ml-[5px] h-[23px] w-[119px] border border-[#999] bg-white px-[6px] placeholder:text-[#999]" />
          <input id="term" type="checkbox" className="mt-[2px] ml-[5px] size-[13px] appearance-none border border-[#666] bg-white" />
          <label htmlFor="term" className="ml-[4px] pt-[3px] leading-[16px] font-bold">Include terminated</label>
        </div>
        <div className="flex items-start">
          <label htmlFor="bo" className="w-[168px] pt-[2px] leading-[15px] font-bold">Billing Office</label>
          <span className="relative flex w-[326px]"><select id="bo" className="h-[23px] w-full appearance-none border border-[#999] bg-white"><option></option></select><Chev className="pointer-events-none absolute top-[8px] right-[10px] text-black" /></span>
          <Btn className="ml-auto w-[52px]">Search</Btn>
        </div>
      </div>
      <div className="flex h-[25px] shrink-0 items-center gap-[15px] bg-[#612120] pr-[12px] pl-[5px] text-white"><span className="mr-auto">Search results</span><FilterIcon /><XlsIcon /><Refresh /></div>
      <table className="w-full table-fixed border-separate border-spacing-0">
        <thead><tr>{["Bill Office", "Debtor", "Debtor Code"].map((h) => <th key={h} className={th}>{h}</th>)}</tr></thead>
        <tbody>
          {[["Manila", "Franklin Baker Company of the Philippines", "31001428"], ["Manila", "Franklin Baker Company of the Philippines-Retire...", "31004055"]].map((r) => (
            <tr key={r[2]}>{r.map((c) => <td key={c} className="h-[25px] border-b border-[#dcd9c8] px-[5px]">{c}</td>)}</tr>
          ))}
        </tbody>
      </table>
      <div className="mt-auto flex h-[35px] shrink-0 bg-white px-[5px]"><div className="flex flex-1 justify-end gap-2 border-t border-[#e0e0e0] pt-[5px]"><Btn className="w-[30px]">Ok</Btn><Btn className="w-[51px]">Cancel</Btn></div></div>
    </div>
  );
}

function Popup() {
  return (
    <div className="absolute top-[171px] right-[347px] bottom-[151px] left-[368px] flex flex-col border border-[#e0cc85] bg-white shadow-[0_6px_20px_4px_rgba(0,0,0,0.25)]">
      <div className="flex h-[29px] shrink-0 items-center bg-[#f8c322] pr-[18px] pl-[7px] font-['Open_Sans',sans-serif] text-black">
        <IEIcon small /><span className="ml-[5px] flex-1 text-[11px]">Portfolio - Add Jobs to Bill - (PRD) - Internet Explorer</span>
        <div className="flex items-center gap-[36px]"><i className="h-px w-[10px] bg-black" /><i className="size-[10px] border border-black" /><CloseX /></div>
      </div>
      <div className="relative flex min-h-0 flex-1 flex-col text-[#333]">
        <div className="h-[44px] shrink-0 bg-[#612120] px-[4px] text-white"><h2 className="leading-[16px] font-bold">Job selection for bill</h2><p className="mt-[5px] pl-[6px] leading-[16px]">Select Job(s) to include in a bill</p></div>
        <div className="grid h-[118px] shrink-0 grid-cols-[146px_1fr] content-start gap-y-[5px] px-[4px] pt-[5px] font-bold">
          {["Debtor", "Bill Type", "Bill to date"].map((l, i) => (
            <React.Fragment key={l}>
              <label htmlFor={"f" + i} className="leading-[16px]">{l}</label>
              {i === 0 ? <span className="relative flex w-[948px]"><select id="f0" className="h-[23px] w-full appearance-none border border-[#999]"><option></option></select><Chev className="absolute top-[8px] right-[10px] text-black" /></span> : <input id={"f" + i} className="h-[23px] w-[300px] border border-[#999]" />}
            </React.Fragment>
          ))}
          <Btn className="col-span-2 w-[51px] justify-self-end font-normal">Search</Btn>
        </div>
        <div className="flex h-[24px] shrink-0 items-center bg-[#612120] pr-[18px] pl-[4px] text-white"><Btn className="w-[100px]">Add Client</Btn><Btn className="mr-auto ml-[5px] w-[110px]">Remove Client</Btn><FilterIcon /><span className="w-[19px]" /><XlsIcon /></div>
        <table className="w-full table-fixed border-separate border-spacing-0"><thead><tr><th className={th + " w-[140px]"}>Client Name</th><th className={th}>Client Code</th><th className={th + " w-[25px]"} /></tr></thead></table>
        <div className="mt-auto ml-[459px] flex h-[17px] shrink-0 items-center bg-[#f0f0f0]"><Chev className="ml-4 rotate-90 text-black" /><span className="ml-2 h-[15px] w-[126px] bg-[#cdcdcd]" /><Chev className="mr-[16px] ml-auto -rotate-90 text-black" /></div>
        <div className="flex h-[25px] shrink-0 items-center justify-end border-b-2 border-[#c5c2ae] bg-[#e8e6d8] pt-[5px] pr-[188px] font-bold">Total</div>
        <div className="flex h-[30px] shrink-0 justify-end gap-[3px] pr-[5px]"><Btn className="w-[62px]">Next &gt;&gt;</Btn><Btn className="w-[51px]">Cancel</Btn></div>
        <div className="absolute inset-0 bg-black/50" />
      </div>
      <div className="flex h-[23px] shrink-0 items-center justify-end border-t border-[#d5d5d5] bg-[#efefef] pr-[22px] font-['Open_Sans',sans-serif] text-[11px] text-black"><svg viewBox="0 0 14 14" className="size-[13px]"><circle cx="5.500" cy="5.500" r="4.500" fill="#cfe6fa" stroke="#6f9dc4" /><path d="M3 5.500h5M5.500 3v5" stroke="#1665c0" strokeWidth="2" /><path d="M9 9l4 4.500" stroke="#a4632f" strokeWidth="2.500" /></svg><span className="mr-[16px] ml-[2px]">100%</span><Down /></div>
      <DebtorDialog />
    </div>
  );
}

const sideIcons: { n: string; i: React.ReactNode; h: string }[] = [
  { n: "Roadmap", h: "h-[62px]", i: <svg viewBox="0 0 24 30" className="h-[30px] w-[24px] fill-current"><path d="M0 0h24v14h-4a8 9 0 0 0-16 0H0zM8 12l1-3a3 3 0 0 1 6 0l1 3 6 18H2z" /><path d="M12 13v4M12 20v6" stroke="#58585a" strokeWidth="2" /></svg> },
  { n: "Clients", h: "h-[60px]", i: <FaHandshake size={32} /> },
  { n: "Team", h: "h-[62px]", i: <svg viewBox="0 0 28 28" className="size-[28px] fill-current"><circle cx="14" cy="3" r="3" /><circle cx="5" cy="8" r="2.500" /><circle cx="23" cy="8" r="2.500" /><path d="M9 14V9q5-4 10 0v5q-5-2-10 0zM1 17l1-5q3-2 6 0v3l-4 4zM27 17l-1-5q-3-2-6 0v3l4 4zM3 22q4-7 11-7t11 7q-4 6-11 6T3 22z" /></svg> },
  { n: "Configuration", h: "h-[62px]", i: <span className="flex"><Settings size={23} strokeWidth={2.500} /><Settings size={14} strokeWidth={3} className="mt-[14px] -ml-1" /></span> },
  { n: "Attachments", h: "h-[62px]", i: <Paperclip size={24} strokeWidth={2} className="-scale-x-100" /> },
  { n: "Dashboard", h: "h-[61px]", i: <svg viewBox="0 0 28 26" className="h-[25px] w-[28px]"><path d="M5 25a13 13 0 1 1 18 0q-9-5-18 0z" fill="currentColor" /><path d="M5 19a10 10 0 1 1 18 0M13 14l8-9" fill="none" stroke="#58585a" strokeDasharray="2 1" /><circle cx="13.500" cy="14.500" r="3" fill="none" stroke="#58585a" strokeWidth="1.500" /></svg> },
  { n: "Help", h: "h-[64px]", i: <span className="flex size-[28px] items-center justify-center rounded-full bg-[#b9b9b9] text-[16px] font-bold text-[#58585a]">?</span> },
];

function Browser() {
  return (
    <div className="relative flex w-1/2 flex-col overflow-hidden bg-white">
      <div className="flex h-[27px] shrink-0 items-center justify-end gap-[36px] pr-5 text-[#888]"><i className="h-px w-[10px] bg-current" /><svg viewBox="0 0 10 10" className="size-[10px] fill-none stroke-current"><path d="M.5 2.500h7v7h-7zM2.500 2.500v-2h7v7h-2" /></svg><CloseX /></div>
      <div className="flex h-[27px] shrink-0 items-start font-['Open_Sans',sans-serif]">
        <svg viewBox="0 0 70 38" className="-mt-[8px] h-[38px] w-[71px] shrink-0 fill-none stroke-[#aaa]"><circle cx="20" cy="19" r="18.500" /><circle cx="55" cy="19.500" r="12.500" /><path d="M9 19l10-9h3l-7 6.500h16v5H15l7 6.500h-3zM62 19.500l-6-6h-3l4.500 4.500H48v3h9.500L53 25.500h3z" /></svg>
        <div className="flex h-[24px] flex-1 items-center gap-[6px] border border-[#b5b5b5] px-1 text-[12px] text-[#777]"><PageIcon /><span className="flex-1"><span className="text-black">https</span>://ipowerph.eps.ad.<span className="text-black">pwcinternal.com</span>/#/modules/legacy/open?url=gui%2Fiportfolio%2Fdefault.aspx</span><Search size={13} className="-scale-x-100" /><Down className="w-[6px]" /><Lock size={12} fill="currentColor" /><RotateCw size={12} /></div>
        <div className="ml-[7px] flex h-[24px] w-[478px] items-center border border-[#b5b5b5] px-2"><input aria-label="Search the web" placeholder="Search..." className="flex-1 text-[11px] outline-none placeholder:text-black" /><Search size={14} strokeWidth={2.500} className="mr-1 -scale-x-100 text-[#777]" /><Down className="w-[6px] text-[#777]" /></div>
        <div className="flex w-[87px] items-center justify-center gap-[7px] pt-[3px] text-[#aaa]"><Home size={17} strokeWidth={1.200} /><Star size={17} strokeWidth={1.200} /><Settings size={17} strokeWidth={1.200} /></div>
      </div>
      <div className="flex h-[23px] shrink-0 bg-linear-to-b from-white to-[#ebebeb] font-['Open_Sans',sans-serif] text-[11px]">
        <div className="flex w-[200px] items-center gap-1 border border-b-0 border-[#b5b5b5] bg-white px-[6px] whitespace-nowrap"><PageIcon /><span className="flex-1">iPower - Built by PwC, for P...</span><CloseX className="size-[8px] stroke-2 text-[#999]" /></div>
        <button aria-label="New tab" className="flex w-[22px] items-center justify-center border-t border-r border-[#b5b5b5] bg-[#e5e5e5]"><svg viewBox="0 0 14 15" className="h-[15px] w-[14px]"><path d="M.5 2.500h10v12H.5z" fill="#fff" stroke="#999" /><path d="M10 0l1 3 3 1-3 1-1 3-1-3-3-1 3-1z" fill="#f0a51c" /></svg></button>
      </div>
      <header className="flex h-[51px] shrink-0 items-center">
        <button aria-label="Menu" className="ml-4 flex size-[30px] flex-col items-center justify-center gap-[2px] rounded-xs bg-[#ee8e0b]"><i className="h-[2px] w-[14px] bg-white" /><i className="h-[2px] w-[14px] bg-white" /><i className="h-[2px] w-[14px] bg-white" /><i className="h-[2px] w-[14px] bg-white" /></button>
        <svg viewBox="0 0 38 38" className="ml-[21px] size-[38px]"><circle cx="19" cy="19" r="17.500" fill="none" stroke="#ee8e0b" strokeWidth="1.600" /><circle cx="11" cy="12" r="3" fill="#ee8e0b" /><path d="M4 12q5 7 12 7 12-1 16-13l3 5q-3 10-13 13v12h-8V24Q6 21 4 12z" fill="#ee8e0b" /><path d="M18 24v13M22 22q8 0 8-8" stroke="#fff" strokeWidth="1.500" fill="none" /></svg>
        <span className="ml-[8px] font-['Liberation_Serif',Georgia,serif] text-[26px] font-bold text-[#58585a] italic">iPower</span>
        <button className="ml-auto flex items-center gap-[3px] font-['Liberation_Sans',sans-serif] text-[12px] text-[#58585a]"><span><b>Jay Armand Ogayon</b> (PH002839)</span><Down /></button>
        <button aria-label="Notifications" className="relative mr-8 ml-[14px] text-[#58585a]"><Bell size={24} strokeWidth={1.300} /><span className="absolute -top-px -right-[3px] size-[16px] rounded-full bg-[#ee8e0b] text-center text-[10px] leading-[16px] font-bold text-white">0</span></button>
      </header>
      <div className="flex min-h-0 flex-1">
        <nav className="w-[60px] shrink-0 bg-[#58585a] text-[#d6d6d6]">{sideIcons.map((s) => <button key={s.n} aria-label={s.n} className={"flex w-full items-center justify-center " + s.h}>{s.i}</button>)}</nav>
        <div className="flex min-w-0 flex-1 flex-col text-[#333]">
          <div className="flex h-10 shrink-0 items-end gap-[5px] bg-[#f7f7f7] pl-[5px] font-['Liberation_Sans',sans-serif] text-[12px]">
            <div className="flex h-[34px] w-[185px] items-center rounded-t-sm bg-white pr-[5px] pl-[10px]"><svg viewBox="0 0 20 20" className="size-[20px] fill-[#58585a]"><path d="M9 1a9 9 0 1 0 10 10l-8 1-2-2zM11 0v9l8 0q-1-8-8-9z" /></svg><b className="ml-[6px] flex-1 font-bold text-[#58585a]">Portfolio</b><Pin className="rotate-45 text-[#999]" /><CloseX className="mb-3 ml-[9px] text-[#999]" /></div>
            <div className="flex h-[34px] w-[185px] items-center rounded-t-sm bg-[#e4e4e4] pr-[5px] pl-[10px]"><svg viewBox="0 0 20 20" className="size-[20px] fill-none stroke-[#999]"><circle cx="10" cy="10" r="9" /><path d="M10 4v6.500H6" /></svg><span className="ml-[6px] flex-1 text-[#888]">Time</span><Pin className="text-black" /><CloseX className="mb-3 ml-[9px] text-[#999]" /></div>
          </div>
          <div className="mx-[10px] mt-[15px]"><h2 className="border-b border-[#999] pb-[4px] text-[12px] leading-[22px] font-bold">My portfolio</h2><LinkList items={["My portfolio view", "Create Bill", "Open Bill", "Create Adjustment Note", "Approve Bill", "Debtor Management"]} /></div>
          <section className="mt-[107px] mr-[23px] ml-[5px]">
            <div className="flex h-[25px] items-center justify-between bg-[#612120] pr-[12px] pl-[5px] font-bold text-white">My unprocessed bills:<Refresh /></div>
            <div className="flex">
              <table className="flex-1 table-fixed border-separate border-spacing-0">
                <thead><tr><th className={th + " w-[227px]"}>Debtor Name</th><th className={th}>Bill No.</th><th className={th + " w-[227px] pr-[20px] text-right"}>Total Net Bill Amt</th></tr></thead>
                <tbody>{bills.map((b) => <tr key={b[0]} className="bg-[#fcfcfc]"><td className="h-[25px] border-b border-[#dcd9c8] px-[5px] whitespace-nowrap">{b[0]}</td><td className="border-b border-[#dcd9c8] px-[5px]">{b[1]}</td><td className="border-b border-[#dcd9c8] px-[5px] text-right">{b[2]}</td></tr>)}</tbody>
              </table>
              <div className="flex w-[17px] flex-col items-center bg-[#f0f0f0] pb-[18px] text-[#555]"><span className="mb-[17px] h-[25px] w-full bg-[#e8e6d8]" /><Chev className="rotate-180 stroke-3" /><span className="mt-[9px] h-[22px] w-[15px] bg-[#cdcdcd]" /><Chev className="mt-auto stroke-3" /></div>
            </div>
          </section>
          <div className="mx-[10px] mt-[26px]"><h2 className="flex items-center gap-1 border-b border-[#999] text-[12px] leading-[20px] font-bold"><FaInfoCircle size={11} />Help</h2><LinkList items={["Knowledge Base", "About Portfolio"]} /></div>
        </div>
      </div>
      <BottomTaskbar />
      <Popup />
    </div>
  );
}

export default function App() {
  return (
    <div className="flex h-screen w-full overflow-hidden font-['DejaVu_Sans',Verdana,sans-serif] text-[11px]">
      <div className="flex w-1/2 font-['Open_Sans','Noto_Sans',sans-serif]"><SideTaskbar /><Excel /></div>
      <Browser />
    </div>
  );
}
